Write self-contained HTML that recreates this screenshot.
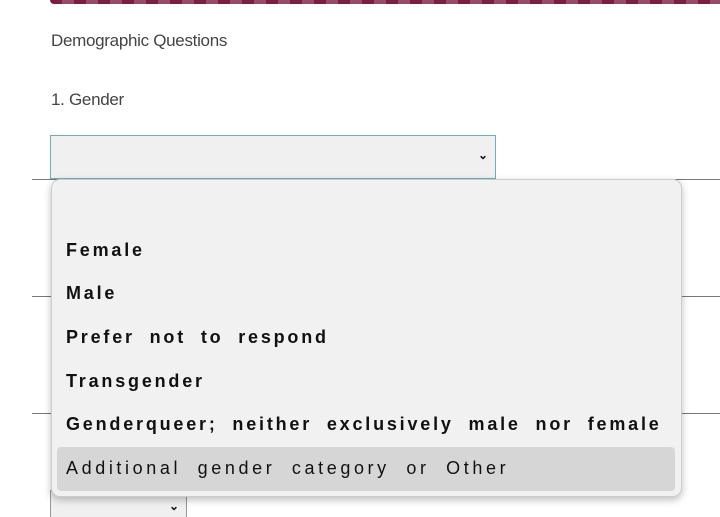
<!DOCTYPE html>
<html><head><style>
html,body{margin:0;width:720px;height:517px;overflow:hidden;background:#fff;font-family:"Liberation Sans",sans-serif;position:relative}
.bar{position:absolute;left:50px;top:0;width:670px;height:4px;border-radius:0 0 0 4px;background:repeating-linear-gradient(90deg,#7a1f42 0 12px,#9a4a68 12px 24px)}
.t{position:absolute;left:51px;color:#444;font-size:17px;letter-spacing:-0.3px}
.line{position:absolute;left:32px;width:688px;height:1px;background:#777}
.sel{position:absolute;left:50px;top:135px;width:444px;height:42px;border:1px solid #6ab0bb;background:#f0f0f0}
.chev{position:absolute;font-size:12px;color:#111;font-weight:bold}
.sel2{position:absolute;left:50px;top:490px;width:135px;height:40px;border:1px solid #999;background:#f0f0f0}
.pop{position:absolute;left:51px;top:179px;width:629px;height:316px;background:#f1f1f1;border:1px solid #ccc;border-radius:9px;box-shadow:0 3px 8px rgba(0,0,0,.25)}
.it{position:absolute;left:14px;font-size:18px;font-weight:bold;letter-spacing:2.8px;word-spacing:7px;color:#111;white-space:nowrap}
.hl{position:absolute;left:5px;top:267px;width:618px;height:44px;background:#d6d6d6;border-radius:4px}
</style></head><body>
<div class="bar"></div>
<div class="t" style="top:31px">Demographic Questions</div>
<div class="t" style="top:90px">1. Gender</div>
<div class="line" style="top:179px"></div>
<div class="line" style="top:296px"></div>
<div class="line" style="top:413px"></div>
<div class="sel"><span class="chev" style="left:427px;top:12px">&#8964;</span></div>
<div class="sel2"><span class="chev" style="left:118px;top:8px">&#8964;</span></div>
<div class="pop">
<div class="hl"></div>
<div class="it" style="top:60px">Female</div>
<div class="it" style="top:103px">Male</div>
<div class="it" style="top:147px">Prefer not to respond</div>
<div class="it" style="top:191px">Transgender</div>
<div class="it" style="top:234px">Genderqueer; neither exclusively male nor female</div>
<div class="it" style="top:278px;font-weight:normal;letter-spacing:3.6px;word-spacing:8px">Additional gender category or Other</div>
</div>
</body></html>
